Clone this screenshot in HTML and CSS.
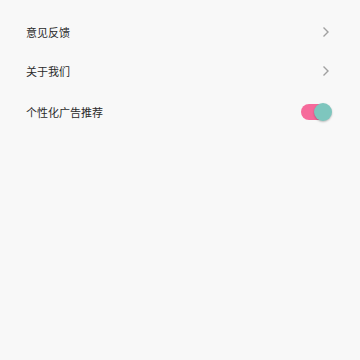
FILE: index.html
```html
<!DOCTYPE html>
<html>
<head>
    <meta charset="utf-8">
    <link rel="stylesheet" href="styles.css">
</head>
<body>
    <div class="list">
        <div class="row">
            <span class="label">意见反馈</span>
            <svg class="arrow" width="8" height="12" viewBox="0 0 8 12"><path d="M1.5 1.5 L6 6 L1.5 10.5" fill="none" stroke="#a0a0a0" stroke-width="1.4"/></svg>
        </div>
        <div class="row">
            <span class="label">关于我们</span>
            <svg class="arrow" width="8" height="12" viewBox="0 0 8 12"><path d="M1.5 1.5 L6 6 L1.5 10.5" fill="none" stroke="#a0a0a0" stroke-width="1.4"/></svg>
        </div>
        <div class="row row-switch">
            <span class="label">个性化广告推荐</span>
            <div class="switch"><div class="knob"></div></div>
        </div>
    </div>
</body>
</html>
```

FILE: styles.css
```css
body {
    margin: 0;
    background-color: #f8f8f8;
    font-family: "Noto Sans CJK SC", "Noto Sans", sans-serif;
}

.list {
    padding-top: 12px;
}

.row {
    height: 39px;
    display: flex;
    align-items: center;
    justify-content: space-between;
    padding: 0 30px 0 26px;
}

.row-switch {
    height: 44px;
    padding-right: 28px;
}

.label {
    font-size: 11px;
    color: #2a2a2a;
}

.switch {
    position: relative;
    width: 29px;
    height: 16px;
    border-radius: 8px;
    background-color: #f66a9b;
    margin-right: 2px;
}

.knob {
    position: absolute;
    right: -2px;
    top: -1px;
    width: 18px;
    height: 18px;
    border-radius: 50%;
    background-color: #7ec6be;
    box-shadow: 0 1px 2px rgba(0, 0, 0, 0.25);
}
```
